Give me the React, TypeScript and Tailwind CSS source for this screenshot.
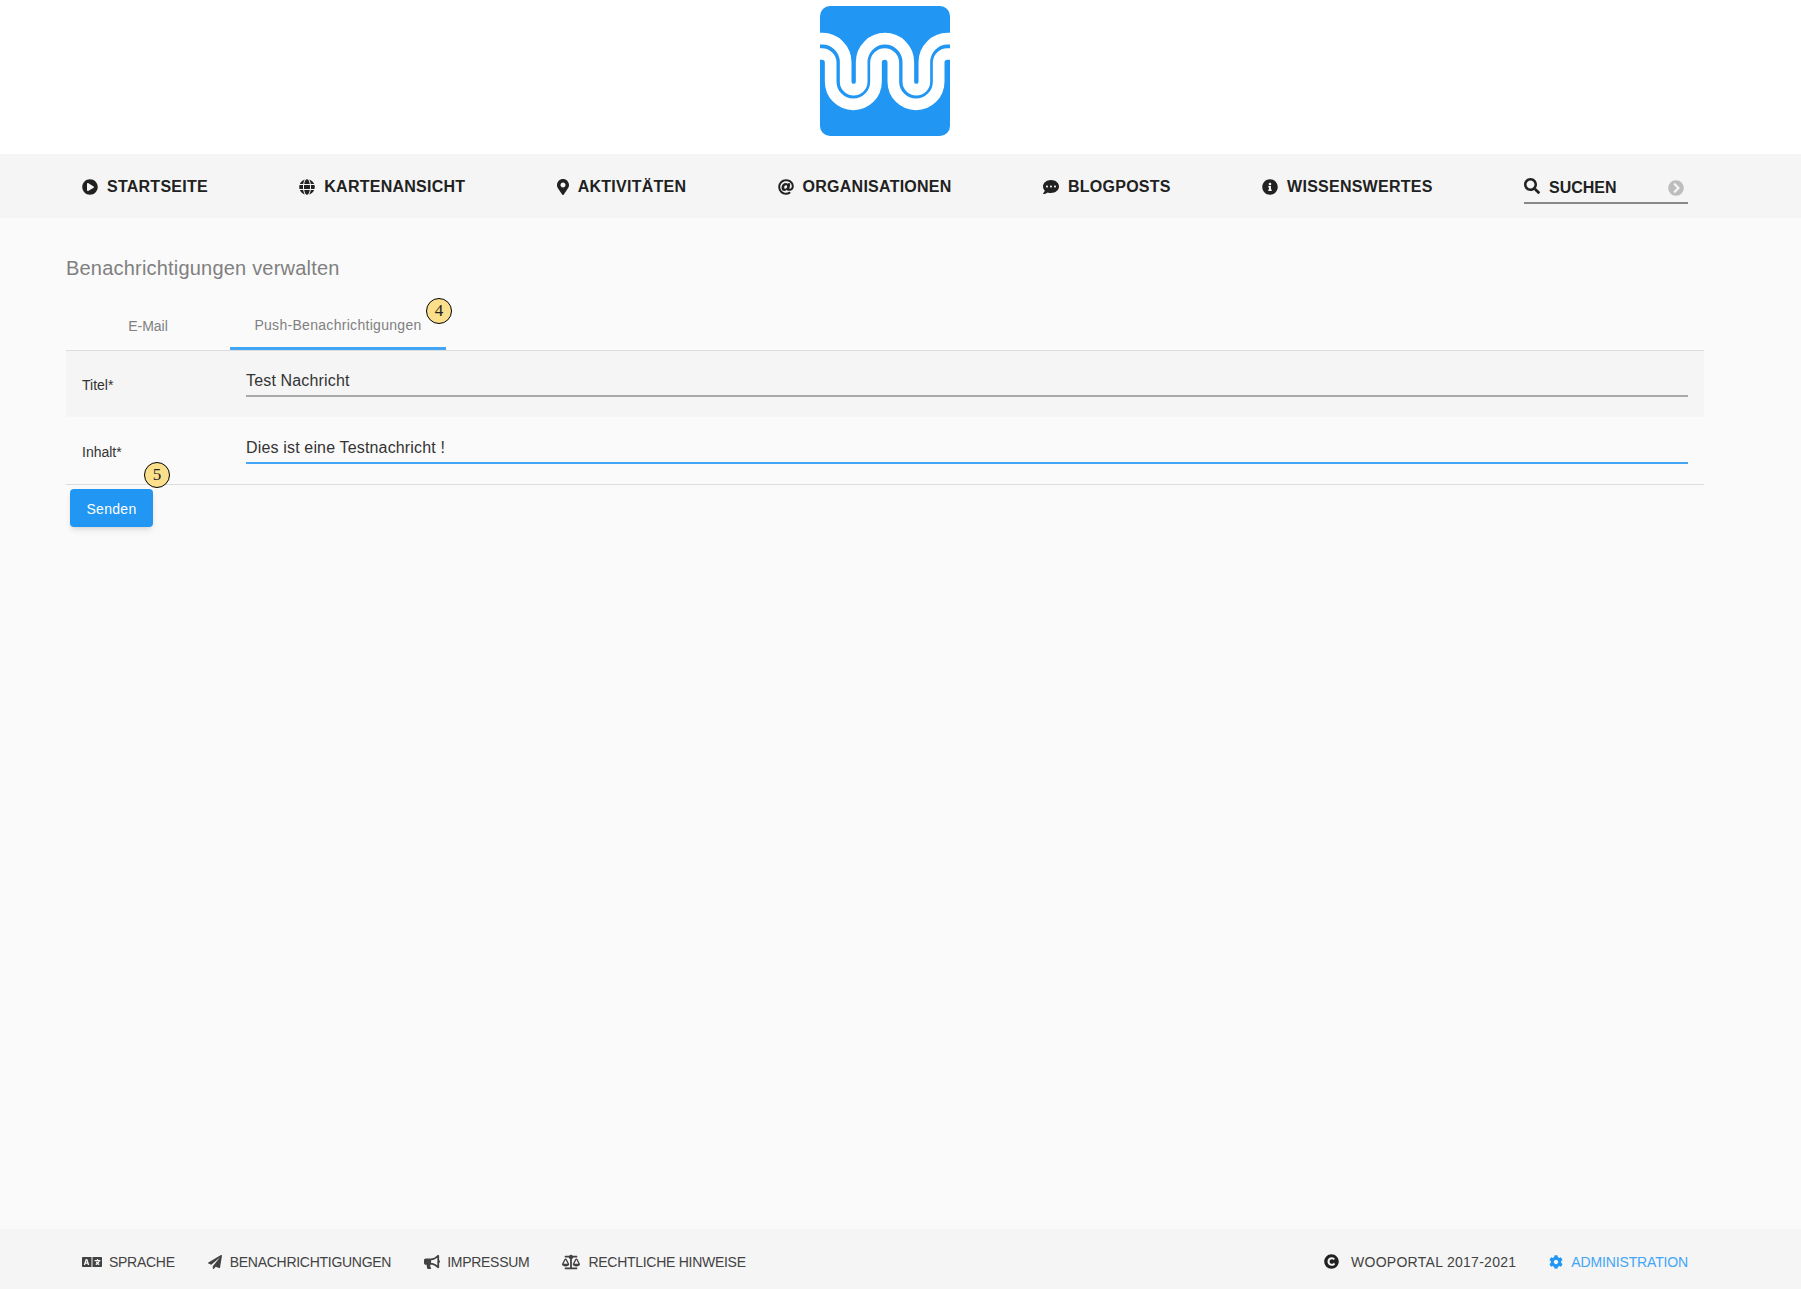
import type { ReactNode } from "react";
import {
	FaAt,
	FaBalanceScale,
	FaBullhorn,
	FaChevronCircleRight,
	FaCog,
	FaCommentDots,
	FaCopyright,
	FaGlobe,
	FaInfoCircle,
	FaLanguage,
	FaMapMarkerAlt,
	FaPaperPlane,
	FaPlayCircle,
	FaSearch,
} from "react-icons/fa";

const NAV_ITEMS = [
	{ label: "STARTSEITE", icon: <FaPlayCircle size={16} /> },
	{ label: "KARTENANSICHT", icon: <FaGlobe size={16} /> },
	{ label: "AKTIVITÄTEN", icon: <FaMapMarkerAlt size={16} className="-mx-[2px]" /> },
	{ label: "ORGANISATIONEN", icon: <FaAt size={16} /> },
	{ label: "BLOGPOSTS", icon: <FaCommentDots size={16} /> },
	{ label: "WISSENSWERTES", icon: <FaInfoCircle size={16} /> },
];

const FOOTER_LINKS = [
	{ label: "SPRACHE", icon: <FaLanguage size={20} className="-mr-[1px]" /> },
	{ label: "BENACHRICHTIGUNGEN", icon: <FaPaperPlane size={14} /> },
	{ label: "IMPRESSUM", icon: <FaBullhorn size={16} className="-mr-[1px]" /> },
	{ label: "RECHTLICHE HINWEISE", icon: <FaBalanceScale size={18} /> },
];

function Logo() {
	return (
		<svg viewBox="120 18 390 390" className="size-[130px]">
			<defs>
				<clipPath id="logo-clip">
					<rect x="120" y="18" width="390" height="390" rx="30" />
				</clipPath>
			</defs>
			<g clipPath="url(#logo-clip)">
				<rect x="120" y="18" width="390" height="390" fill="#2196f3" />
				<path
					d="M100 162H126A26 26 0 0 1 152 188V245A68 68 0 0 0 288 245V188A26 26 0 0 1 340 188V245A68 68 0 0 0 476 245V188A26 26 0 0 1 502 162H530"
					fill="none"
					stroke="#fff"
					strokeWidth="35"
				/>
				<path
					d="M100 116H127A70 70 0 0 1 197 186V245A24 24 0 0 0 245 245V186A70 70 0 0 1 385 186V245A24 24 0 0 0 433 245V186A70 70 0 0 1 503 116H530"
					fill="none"
					stroke="#fff"
					strokeWidth="35"
				/>
			</g>
		</svg>
	);
}

function Badge({ children, className }: { children: ReactNode; className: string }) {
	return (
		<span
			className={`absolute flex size-[26px] items-center justify-center rounded-full border border-black bg-[#fbdf8b] font-['Liberation_Serif',serif] text-[17px] text-[#222] ${className}`}
		>
			{children}
		</span>
	);
}

function FormRow({
	label,
	value,
	focused,
}: {
	label: string;
	value: string;
	focused?: boolean;
}) {
	return (
		<div
			className={`flex items-start px-4 ${focused ? "h-[68px] border-b border-[#ddd] pt-[15px]" : "h-[66px] bg-[#f5f5f5] pt-[14px]"}`}
		>
			<label className="w-[164px] pt-[12px] text-sm leading-[16px] text-[#333]">
				{label}
			</label>
			<input
				readOnly
				value={value}
				className={`h-8 flex-1 bg-transparent pt-[1px] text-base tracking-[0.16px] text-[#333] outline-none ${focused ? "border-b-2 border-[#42a5f5]" : "border-b-2 border-[#aaa]"}`}
			/>
		</div>
	);
}

export default function App() {
	return (
		<div className="flex min-h-screen flex-col bg-[#fafafa] font-['Liberation_Sans',Arial,sans-serif]">
			<header className="flex h-[154px] justify-center bg-white pr-[31px] pt-[6px]">
				<Logo />
			</header>

			<nav className="flex h-16 items-center justify-between bg-[#f5f5f5] pl-[82px] pr-[113px] pt-[1px] text-[#212121]">
				{NAV_ITEMS.map((item) => (
					<a
						key={item.label}
						className="flex items-center gap-[9px] text-base font-bold tracking-[0.25px]"
					>
						{item.icon}
						{item.label}
					</a>
				))}
				<div className="mb-[14px] flex h-[34px] w-[164px] items-center gap-[9px] self-end border-b-2 border-[#888]">
					<FaSearch size={16} />
					<span className="flex-1 pt-[3px] text-base font-bold">SUCHEN</span>
					<FaChevronCircleRight size={16} className="mr-[4px] mt-[3px] text-[#bdbdbd]" />
				</div>
			</nav>

			<main className="flex-1 pl-[66px] pr-[97px] pt-[38px]">
				<h1 className="text-xl leading-6 tracking-[0.2px] text-[#808080]">
					Benachrichtigungen verwalten
				</h1>

				<div className="relative mt-[17px] flex h-[54px] border-b border-[#ddd] text-sm text-[#808080]">
					<div className="flex w-[164px] items-center justify-center pt-[5px]">E-Mail</div>
					<div className="flex h-[53px] w-[216px] items-center justify-center border-b-[3px] border-[#42a5f5] pt-[5px] tracking-[0.3px]">
						Push-Benachrichtigungen
					</div>
					<Badge className="left-[360px] top-[1px]">4</Badge>
				</div>

				<FormRow label="Titel*" value="Test Nachricht" />
				<div className="relative">
					<FormRow label="Inhalt*" value="Dies ist eine Testnachricht !" focused />
					<Badge className="left-[78px] top-[45px]">5</Badge>
				</div>

				<button className="ml-1 mt-[4px] h-[38px] w-[83px] rounded bg-[#2196f3] pt-[1px] text-sm tracking-[0.3px] text-white shadow-md">
					Senden
				</button>
			</main>

			<footer className="flex h-[60px] items-center justify-between bg-[#f5f5f5] pl-[82px] pr-[113px] pt-[5px] text-sm text-[#424242]">
				<div className="flex items-center gap-[33px] tracking-[-0.28px]">
					{FOOTER_LINKS.map((link) => (
						<a key={link.label} className="flex items-center gap-2">
							{link.icon}
							{link.label}
						</a>
					))}
				</div>
				<div className="flex items-center gap-[33px]">
					<span className="flex items-center gap-[12px] tracking-[0.28px]">
						<FaCopyright size={15} className="text-[#212121]" />
						WOOPORTAL 2017-2021
					</span>
					<a className="flex items-center gap-[8px] tracking-[-0.15px] text-[#42a5f5]">
						<FaCog size={14} className="text-[#2196f3]" />
						ADMINISTRATION
					</a>
				</div>
			</footer>
		</div>
	);
}
